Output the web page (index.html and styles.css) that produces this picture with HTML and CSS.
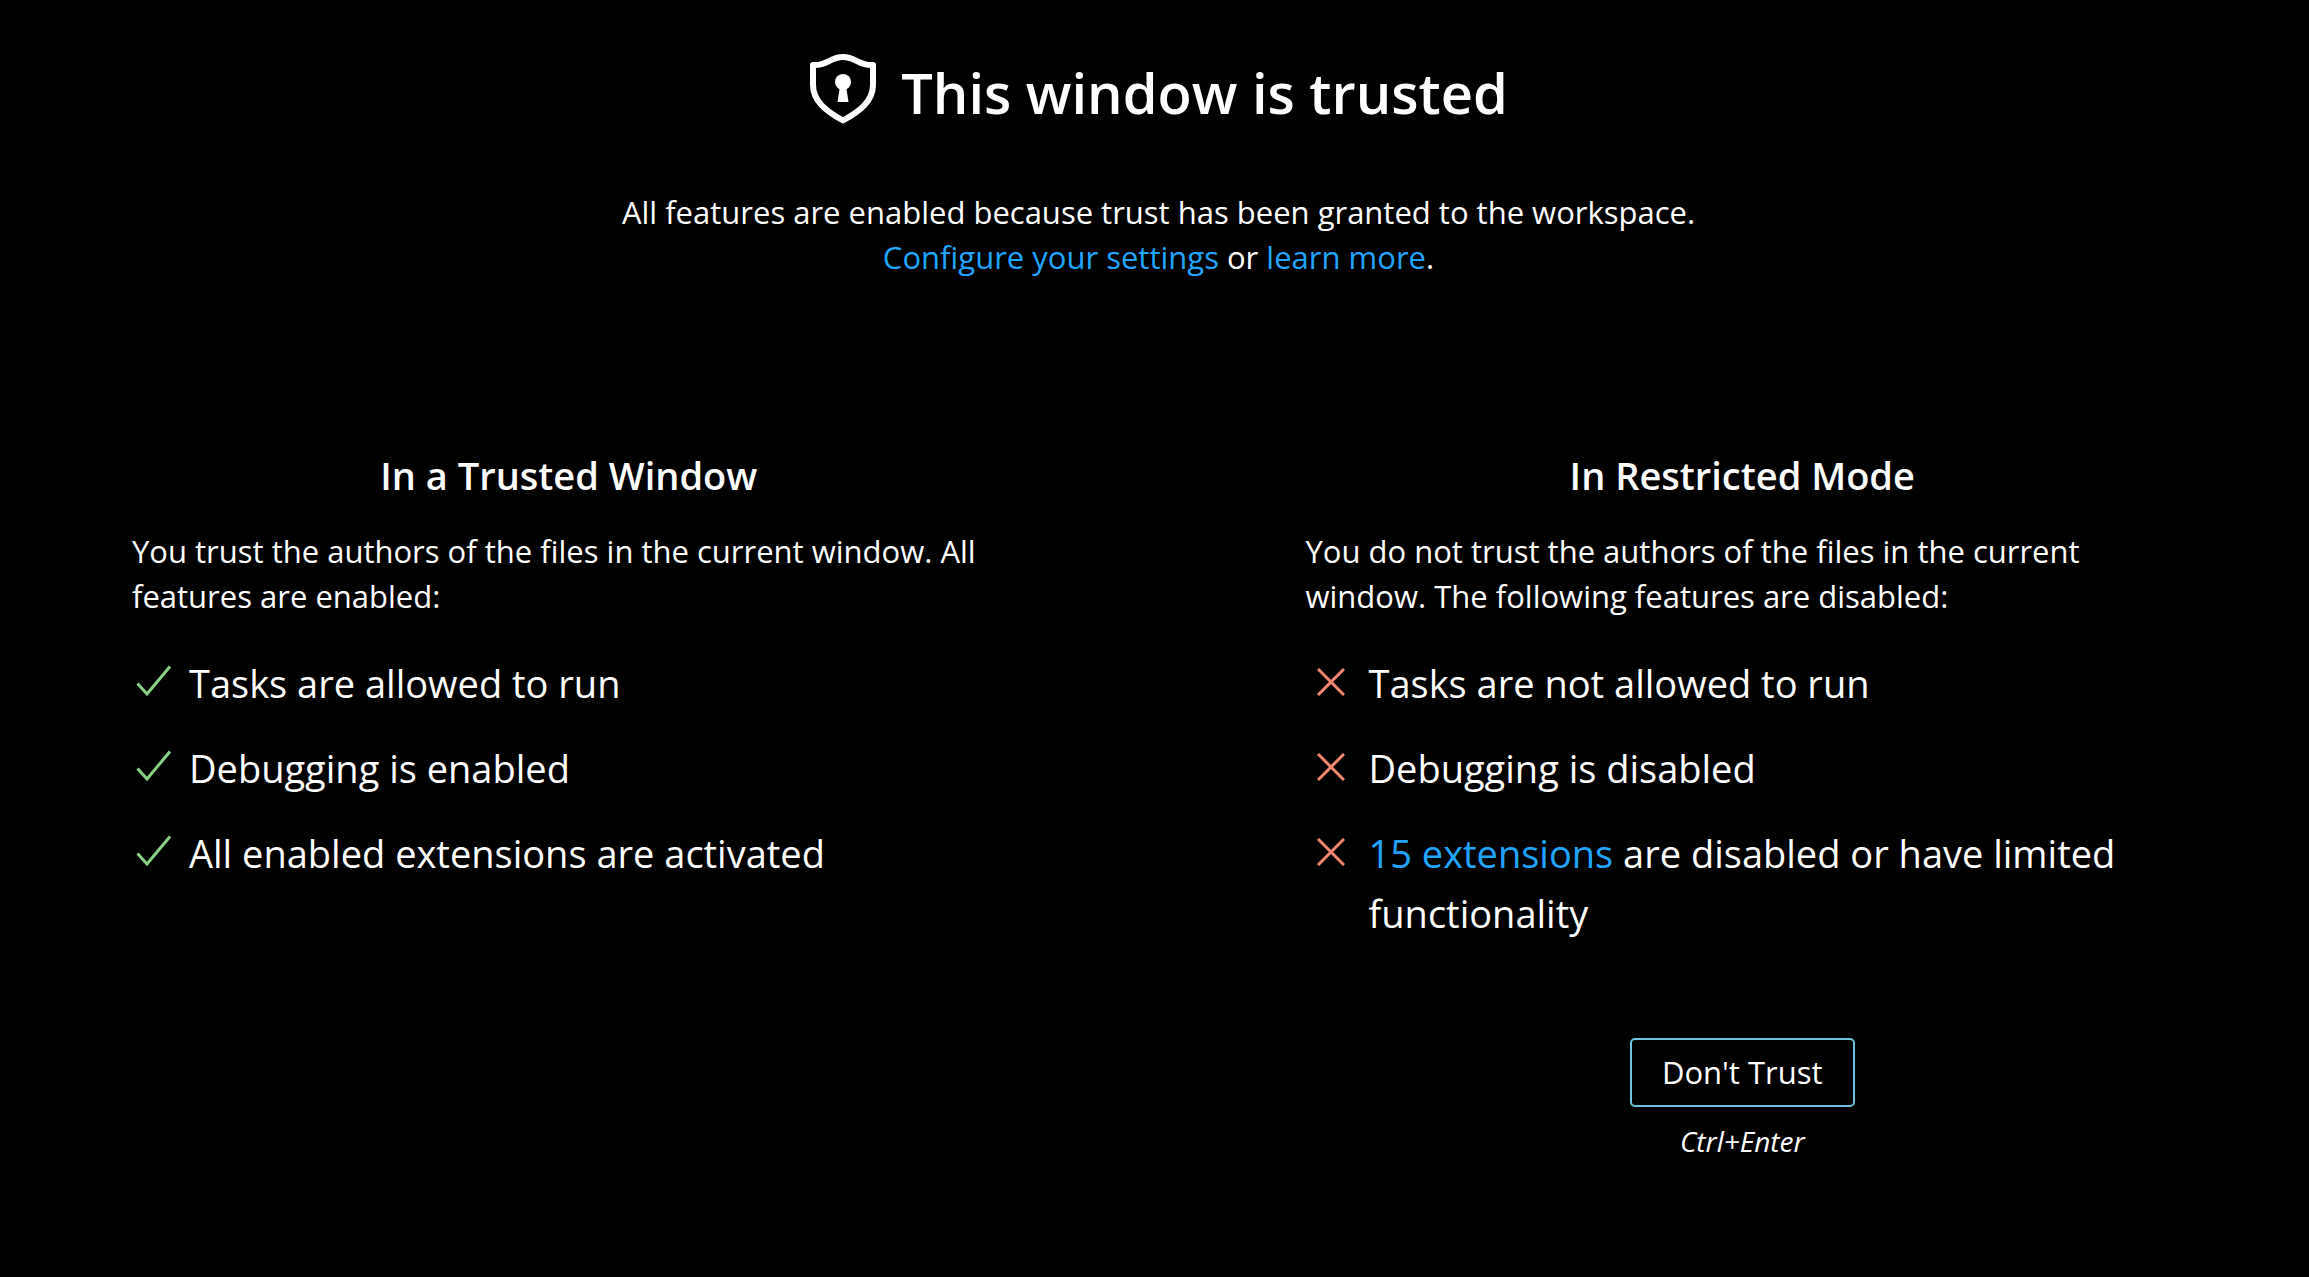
FILE: index.html
```
<!DOCTYPE html>
<html lang="en">
<head>
<meta charset="utf-8">
<meta name="viewport" content="width=device-width, initial-scale=1">
<title>Workspace Trust</title>
<link rel="stylesheet" href="styles.css">
</head>
<body>
<svg class="sprite" aria-hidden="true">
  <symbol id="check" viewBox="0 0 36 32"><path d="M1.5 18.5 L11 29 L34 1.5"/></symbol>
  <symbol id="cross" viewBox="0 0 28 28"><path d="M1 1 L27 27 M27 1 L1 27"/></symbol>
</svg>
<main class="page">
  <header class="header">
    <h1 class="title">
      <svg class="shield" viewBox="0 0 68 70" aria-hidden="true">
        <path class="shield-outline" d="M4 11 C18 12 21 3 34 3 C47 3 50 12 64 11 V31 C64 47 51 57 34 66.500 C17 57 4 47 4 31 Z"/>
        <circle cx="34" cy="28" r="8"/>
        <path d="M31 32 H37 L39.500 48 H28.500 Z"/>
      </svg>
      <span>This window is trusted</span>
    </h1>
    <p class="intro">All features are enabled because trust has been granted to the workspace.<br><a href="#settings">Configure your settings</a> or <a href="#learn-more">learn more</a>.</p>
  </header>
  <div class="columns">
    <section class="column">
      <h2 class="heading">In a Trusted Window</h2>
      <p class="summary">You trust the authors of the files in the current window. All features are enabled:</p>
      <ul class="features">
        <li class="feature"><svg class="icon check"><use href="#check"/></svg><span>Tasks are allowed to run</span></li>
        <li class="feature"><svg class="icon check"><use href="#check"/></svg><span>Debugging is enabled</span></li>
        <li class="feature"><svg class="icon check"><use href="#check"/></svg><span>All enabled extensions are activated</span></li>
      </ul>
    </section>
    <section class="column">
      <h2 class="heading">In Restricted Mode</h2>
      <p class="summary">You do not trust the authors of the files in the current window. The following features are disabled:</p>
      <ul class="features restricted">
        <li class="feature"><svg class="icon cross"><use href="#cross"/></svg><span>Tasks are not allowed to run</span></li>
        <li class="feature"><svg class="icon cross"><use href="#cross"/></svg><span>Debugging is disabled</span></li>
        <li class="feature"><svg class="icon cross"><use href="#cross"/></svg><span><a href="#extensions">15 extensions</a> are disabled or have limited functionality</span></li>
      </ul>
      <div class="actions">
        <button class="button" type="button">Don't Trust</button>
        <span class="shortcut">Ctrl+Enter</span>
      </div>
    </section>
  </div>
</main>
</body>
</html>
```
FILE: styles.css
```
* {
  box-sizing: border-box;
}

body {
  margin: 0;
  background: #000;
  color: #fff;
  font-family: "Segoe UI", "Open Sans", "Noto Sans", sans-serif;
  font-size: 31px;
  line-height: 45px;
}

h1, h2, p, ul {
  margin: 0;
  padding: 0;
}

a {
  color: #21a6ff;
  text-decoration: none;
}

.sprite {
  position: absolute;
  width: 0;
  height: 0;
}

.page {
  padding: 48px 130px 80px 132px;
}

.header {
  display: flex;
  flex-direction: column;
  align-items: center;
  gap: 54px;
  padding-left: 6px;
  text-align: center;
}

.title {
  display: flex;
  align-items: center;
  gap: 24px;
  font-size: 56px;
  font-weight: 600;
  line-height: 88px;
}

.shield {
  width: 68px;
  height: 70px;
  margin-bottom: 6px;
  fill: #fff;
}

.shield-outline {
  fill: none;
  stroke: #fff;
  stroke-width: 6;
  stroke-linejoin: round;
}

.columns {
  display: grid;
  grid-template-columns: 1fr 1fr;
  gap: 300px;
  margin-top: 169px;
}

.heading {
  font-size: 38px;
  font-weight: 600;
  line-height: 52px;
  text-align: center;
}

.summary {
  margin-top: 28px;
}

.features {
  display: flex;
  flex-direction: column;
  gap: 25px;
  margin-top: 34px;
  font-size: 38px;
  line-height: 60px;
  list-style: none;
}

.feature {
  display: flex;
  gap: 17px;
  padding-left: 4px;
}

.restricted .feature {
  gap: 24px;
  padding-left: 11px;
}

.icon {
  flex: none;
  margin-top: 12px;
  fill: none;
  stroke-width: 3;
}

.check {
  width: 36px;
  height: 32px;
  stroke: #89d185;
}

.cross {
  width: 28px;
  height: 28px;
  margin-top: 15px;
  stroke: #f48771;
}

.actions {
  display: flex;
  flex-direction: column;
  align-items: center;
  gap: 14px;
  margin-top: 95px;
}

.button {
  padding: 10px 30px;
  border: 2px solid #6fc3df;
  border-radius: 5px;
  background: #000;
  color: inherit;
  font: inherit;
}

.shortcut {
  font-size: 28px;
  font-style: italic;
  line-height: 40px;
}
```
